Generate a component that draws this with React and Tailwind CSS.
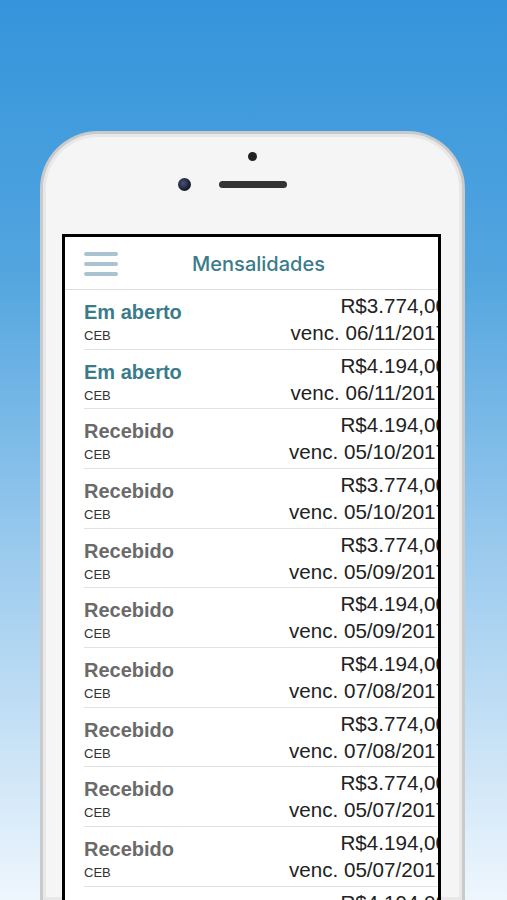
import React from 'react';

const mensalidades = [
    { status: 'Em aberto', valor: 'R$3.774,00', venc: '06/11/2017', aberto: true },
    { status: 'Em aberto', valor: 'R$4.194,00', venc: '06/11/2017', aberto: true },
    { status: 'Recebido', valor: 'R$4.194,00', venc: '05/10/2017' },
    { status: 'Recebido', valor: 'R$3.774,00', venc: '05/10/2017' },
    { status: 'Recebido', valor: 'R$3.774,00', venc: '05/09/2017' },
    { status: 'Recebido', valor: 'R$4.194,00', venc: '05/09/2017' },
    { status: 'Recebido', valor: 'R$4.194,00', venc: '07/08/2017' },
    { status: 'Recebido', valor: 'R$3.774,00', venc: '07/08/2017' },
    { status: 'Recebido', valor: 'R$3.774,00', venc: '05/07/2017' },
    { status: 'Recebido', valor: 'R$4.194,00', venc: '05/07/2017' },
    { status: 'Recebido', valor: 'R$4.194,00', venc: '05/06/2017' },
];

const Row = ({ item }) => (
    <div className="ml-[19px] h-[59.67px] shrink-0 border-b border-[#e2e2e2] flex justify-between pr-[5px]">
        <div className="pt-[10px]">
            <p className={`text-[20px] leading-[24px] font-bold ${item.aberto ? 'text-[#3a7b8b]' : 'text-[#6a6a6a]'}`}>{item.status}</p>
            <p className="mt-[4px] text-[13px] leading-[16px] text-[#333]">CEB</p>
        </div>
        <div className="pt-[4px] text-right text-[20.6px] leading-[24px] text-[#222] whitespace-nowrap">
            <p>{item.valor}</p>
            <p className="mt-[3px]">venc. {item.venc}</p>
        </div>
    </div>
);

const App = () => {
    return (
        <div className="w-[507px] h-[900px] overflow-hidden bg-[linear-gradient(to_bottom,#3594db_0%,#52a5df_30%,#9ccbee_62%,#eef6fd_100%)] font-['Liberation_Sans',Arial,sans-serif]">
            {/* aparelho */}
            <div className="ml-[40px] mt-[131px] w-[425px] h-[769px] rounded-t-[58px] border-x-[3px] border-t-[3px] border-[#cacaca] bg-[#f5f5f5] shadow-[inset_0_0_0_3px_#e8e8e8] flex flex-col">
                <div className="h-[100px] shrink-0 flex flex-col">
                    <div className="mt-[18px] mx-auto w-[9px] h-[9px] rounded-full bg-[#222]" />
                    <div className="mt-[17px] flex items-center pl-[135px]">
                        <div className="w-[13px] h-[13px] rounded-full bg-[radial-gradient(circle_at_40%_40%,#4a5478,#1a1d2e_60%)]" />
                        <div className="ml-[28px] w-[68px] h-[7px] rounded-full bg-[#333]" />
                    </div>
                </div>

                {/* tela */}
                <div className="ml-[19px] w-[379px] flex-1 border-x-[3px] border-t-[3px] border-black bg-white overflow-hidden">
                    <div className="w-[387px] flex flex-col">
                        <header className="h-[53px] shrink-0 grid grid-cols-[1fr_auto_1fr] items-center border-b border-[#dedede]">
                            <div className="pl-[19px] flex flex-col gap-[6px] pt-[1px]">
                                <span className="block w-[34px] h-[4px] rounded-full bg-[#a9c3d1]" />
                                <span className="block w-[34px] h-[4px] rounded-full bg-[#a9c3d1]" />
                                <span className="block w-[34px] h-[4px] rounded-full bg-[#a9c3d1]" />
                            </div>
                            <h1 className="font-['Inter',sans-serif] text-[20px] font-medium text-[#3b7b8c] pt-[2px]">Mensalidades</h1>
                            <div />
                        </header>
                        {mensalidades.map((m, i) => (
                            <Row key={i} item={m} />
                        ))}
                    </div>
                </div>
            </div>
        </div>
    );
};

export default App;
